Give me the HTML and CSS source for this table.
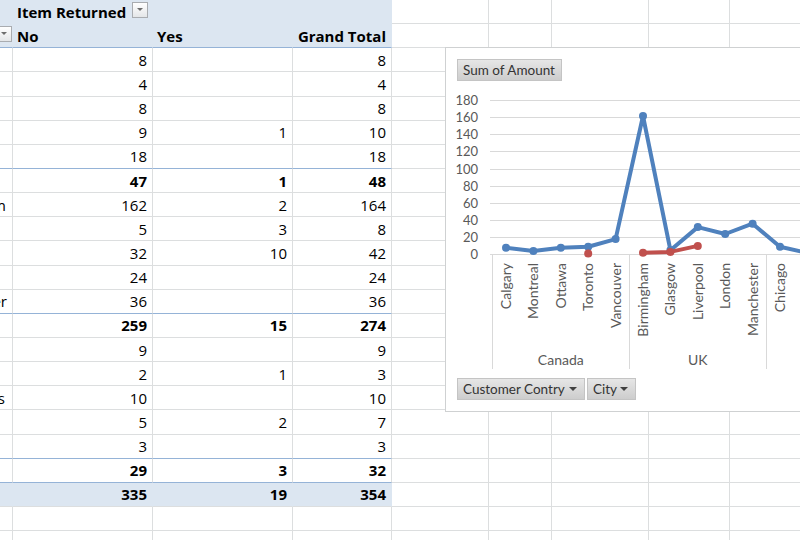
FILE: index.html
```html
<!DOCTYPE html>
<html>
<head>
<meta charset="utf-8">
<link rel="stylesheet" href="styles.css">
</head>
<body>
<div class="sheet">
  <div class="row hd">
    <div class="c p"></div>
    <div class="c p b sp">Item Returned<span class="dd"></span></div>
    <div class="c p"></div><div class="c p"></div>
    <div class="c"></div><div class="c"></div><div class="c"></div><div class="c"></div><div class="c"></div>
  </div>
  <div class="row hd hd2">
    <div class="c p cut"><span class="dd"></span></div>
    <div class="c p b">No</div>
    <div class="c p b">Yes</div>
    <div class="c p b n">Grand Total</div>
    <div class="c"></div><div class="c"></div><div class="c"></div><div class="c"></div><div class="c"></div>
  </div>
  <div class="row"><div class="c p"></div><div class="c p n">8</div><div class="c p n"></div><div class="c p n">8</div><div class="c"></div><div class="c"></div><div class="c"></div><div class="c"></div><div class="c"></div></div>
  <div class="row"><div class="c p"></div><div class="c p n">4</div><div class="c p n"></div><div class="c p n">4</div><div class="c"></div><div class="c"></div><div class="c"></div><div class="c"></div><div class="c"></div></div>
  <div class="row"><div class="c p"></div><div class="c p n">8</div><div class="c p n"></div><div class="c p n">8</div><div class="c"></div><div class="c"></div><div class="c"></div><div class="c"></div><div class="c"></div></div>
  <div class="row"><div class="c p"></div><div class="c p n">9</div><div class="c p n">1</div><div class="c p n">10</div><div class="c"></div><div class="c"></div><div class="c"></div><div class="c"></div><div class="c"></div></div>
  <div class="row pre"><div class="c p"></div><div class="c p n">18</div><div class="c p n"></div><div class="c p n">18</div><div class="c"></div><div class="c"></div><div class="c"></div><div class="c"></div><div class="c"></div></div>
  <div class="row sub"><div class="c p"></div><div class="c p n">47</div><div class="c p n">1</div><div class="c p n">48</div><div class="c"></div><div class="c"></div><div class="c"></div><div class="c"></div><div class="c"></div></div>
  <div class="row"><div class="c p cut cm"><span>Birmingham</span></div><div class="c p n">162</div><div class="c p n">2</div><div class="c p n">164</div><div class="c"></div><div class="c"></div><div class="c"></div><div class="c"></div><div class="c"></div></div>
  <div class="row"><div class="c p"></div><div class="c p n">5</div><div class="c p n">3</div><div class="c p n">8</div><div class="c"></div><div class="c"></div><div class="c"></div><div class="c"></div><div class="c"></div></div>
  <div class="row"><div class="c p"></div><div class="c p n">32</div><div class="c p n">10</div><div class="c p n">42</div><div class="c"></div><div class="c"></div><div class="c"></div><div class="c"></div><div class="c"></div></div>
  <div class="row"><div class="c p"></div><div class="c p n">24</div><div class="c p n"></div><div class="c p n">24</div><div class="c"></div><div class="c"></div><div class="c"></div><div class="c"></div><div class="c"></div></div>
  <div class="row pre"><div class="c p cut cer"><span>Manchester</span></div><div class="c p n">36</div><div class="c p n"></div><div class="c p n">36</div><div class="c"></div><div class="c"></div><div class="c"></div><div class="c"></div><div class="c"></div></div>
  <div class="row sub"><div class="c p"></div><div class="c p n">259</div><div class="c p n">15</div><div class="c p n">274</div><div class="c"></div><div class="c"></div><div class="c"></div><div class="c"></div><div class="c"></div></div>
  <div class="row"><div class="c p"></div><div class="c p n">9</div><div class="c p n"></div><div class="c p n">9</div><div class="c"></div><div class="c"></div><div class="c"></div><div class="c"></div><div class="c"></div></div>
  <div class="row"><div class="c p"></div><div class="c p n">2</div><div class="c p n">1</div><div class="c p n">3</div><div class="c"></div><div class="c"></div><div class="c"></div><div class="c"></div><div class="c"></div></div>
  <div class="row"><div class="c p cut cs"><span>Los Angeles</span></div><div class="c p n">10</div><div class="c p n"></div><div class="c p n">10</div><div class="c"></div><div class="c"></div><div class="c"></div><div class="c"></div><div class="c"></div></div>
  <div class="row"><div class="c p"></div><div class="c p n">5</div><div class="c p n">2</div><div class="c p n">7</div><div class="c"></div><div class="c"></div><div class="c"></div><div class="c"></div><div class="c"></div></div>
  <div class="row pre"><div class="c p"></div><div class="c p n">3</div><div class="c p n"></div><div class="c p n">3</div><div class="c"></div><div class="c"></div><div class="c"></div><div class="c"></div><div class="c"></div></div>
  <div class="row sub pre"><div class="c p"></div><div class="c p n">29</div><div class="c p n">3</div><div class="c p n">32</div><div class="c"></div><div class="c"></div><div class="c"></div><div class="c"></div><div class="c"></div></div>
  <div class="row gt"><div class="c p"></div><div class="c p n">335</div><div class="c p n">19</div><div class="c p n">354</div><div class="c"></div><div class="c"></div><div class="c"></div><div class="c"></div><div class="c"></div></div>
  <div class="row"><div class="c p"></div><div class="c p"></div><div class="c p"></div><div class="c p"></div><div class="c"></div><div class="c"></div><div class="c"></div><div class="c"></div><div class="c"></div></div>
  <div class="row"><div class="c p"></div><div class="c p"></div><div class="c p"></div><div class="c p"></div><div class="c"></div><div class="c"></div><div class="c"></div><div class="c"></div><div class="c"></div></div>
</div>

<div class="chart">
  <div class="chart-top"><span class="btn">Sum of Amount</span></div>
  <svg class="plot" width="359" height="295" viewBox="446 81 359 295">
    <g class="grid">
      <line x1="490" y1="100.5" x2="805" y2="100.5"/>
      <line x1="490" y1="117.5" x2="805" y2="117.5"/>
      <line x1="490" y1="134.5" x2="805" y2="134.5"/>
      <line x1="490" y1="151.5" x2="805" y2="151.5"/>
      <line x1="490" y1="169.5" x2="805" y2="169.5"/>
      <line x1="490" y1="186.5" x2="805" y2="186.5"/>
      <line x1="490" y1="203.5" x2="805" y2="203.5"/>
      <line x1="490" y1="220.5" x2="805" y2="220.5"/>
      <line x1="490" y1="237.5" x2="805" y2="237.5"/>
      <line x1="490" y1="254.5" x2="805" y2="254.5"/>
      <line x1="492.5" y1="254.5" x2="492.5" y2="369"/>
      <line x1="629.5" y1="254.5" x2="629.5" y2="369"/>
      <line x1="766.5" y1="254.5" x2="766.5" y2="369"/>
    </g>
    <g class="ylab">
      <text x="478" y="105">180</text>
      <text x="478" y="122">160</text>
      <text x="478" y="139">140</text>
      <text x="478" y="156">120</text>
      <text x="478" y="173.5">100</text>
      <text x="478" y="190.5">80</text>
      <text x="478" y="207.5">60</text>
      <text x="478" y="224.5">40</text>
      <text x="478" y="241.5">20</text>
      <text x="478" y="258.5">0</text>
    </g>
    <g class="xlab">
      <text x="511" y="263" transform="rotate(-90 511 263)">Calgary</text>
      <text x="538.4" y="263" transform="rotate(-90 538.4 263)">Montreal</text>
      <text x="565.8" y="263" transform="rotate(-90 565.8 263)">Ottawa</text>
      <text x="593.2" y="263" transform="rotate(-90 593.2 263)">Toronto</text>
      <text x="620.6" y="263" transform="rotate(-90 620.6 263)">Vancouver</text>
      <text x="648" y="263" transform="rotate(-90 648 263)">Birmingham</text>
      <text x="675.4" y="263" transform="rotate(-90 675.4 263)">Glasgow</text>
      <text x="702.8" y="263" transform="rotate(-90 702.8 263)">Liverpool</text>
      <text x="730.2" y="263" transform="rotate(-90 730.2 263)">London</text>
      <text x="757.6" y="263" transform="rotate(-90 757.6 263)">Manchester</text>
      <text x="785" y="263" transform="rotate(-90 785 263)">Chicago</text>
      <text x="812.4" y="263" transform="rotate(-90 812.4 263)">Dallas</text>
    </g>
    <g class="glab">
      <text x="560.8" y="365">Canada</text>
      <text x="697.8" y="365">UK</text>
    </g>
    <polyline class="s1" points="506,247.7 533.4,251.1 560.8,247.7 588.2,246.8 615.6,239.1 643,116 670.4,250.2 697.8,227.1 725.2,234 752.6,223.7 780,246.8 807.4,252.8"/>
    <g class="d1">
      <circle cx="506" cy="247.7" r="4"/>
      <circle cx="533.4" cy="251.1" r="4"/>
      <circle cx="560.8" cy="247.7" r="4"/>
      <circle cx="588.2" cy="246.8" r="4"/>
      <circle cx="615.6" cy="239.1" r="4"/>
      <circle cx="643" cy="116" r="4"/>
      <circle cx="670.4" cy="250.2" r="4"/>
      <circle cx="697.8" cy="227.1" r="4"/>
      <circle cx="725.2" cy="234" r="4"/>
      <circle cx="752.6" cy="223.7" r="4"/>
      <circle cx="780" cy="246.8" r="4"/>
    </g>
    <polyline class="s2" points="643,252.8 670.4,251.9 697.8,245.9"/>
    <g class="d2">
      <circle cx="588.2" cy="253.6" r="4"/>
      <circle cx="643" cy="252.8" r="4"/>
      <circle cx="670.4" cy="251.9" r="4"/>
      <circle cx="697.8" cy="245.9" r="4"/>
    </g>
  </svg>
  <div class="chart-bottom">
    <span class="btn fld w1">Customer Contry<i class="arr"></i></span>
    <span class="btn fld w2">City<i class="arr"></i></span>
  </div>
</div>
</body>
</html>
```
FILE: styles.css
```css
html, body {
  margin: 0;
  padding: 0;
  background: #ffffff;
}
body {
  width: 800px;
  height: 540px;
  overflow: hidden;
  position: relative;
  font-family: "Open Sans", Lato, "Liberation Sans", sans-serif;
  color: #000;
}
.sheet {
  display: grid;
  grid-template-columns: 13px 140px 140px 99px 97px 63px 97px 81px 140px;
  grid-auto-rows: 24.15px;
  font-size: 15px;
}
.row { display: contents; }
.c {
  box-sizing: border-box;
  border-right: 1px solid #dcdedf;
  border-bottom: 1px solid #dcdedf;
  padding: 0 5px 0 4px;
  display: flex;
  align-items: center;
  white-space: nowrap;
  overflow: hidden;
  min-width: 0;
}
.n { justify-content: flex-end; }
.b { font-weight: 700; }
.sp { justify-content: space-between; padding-right: 4px; }
.cut { justify-content: flex-end; padding: 0 4px 0 0; }
.cut span { flex: none; }
.cm { padding-right: 6px; }
.cer { padding-right: 5px; }
.cs { padding-right: 7px; }
.hd .p {
  background: #dce6f1;
  border-right-color: #dce6f1;
  border-bottom-color: #dce6f1;
}
.hd2 .p { border-bottom-color: #95b3d7; }
.pre .p { border-bottom-color: #95b3d7; }
.sub .p { font-weight: 700; }
.gt .p {
  background: #dce6f1;
  border-right-color: #dce6f1;
  font-weight: 700;
}
.dd {
  flex: none;
  box-sizing: border-box;
  width: 16px;
  height: 16px;
  margin-top: -4px;
  border: 1px solid #a9acb0;
  background: linear-gradient(#ffffff, #e4e6e8);
  display: flex;
  align-items: center;
  justify-content: center;
}
.dd::after {
  content: "";
  border-left: 3px solid transparent;
  border-right: 3px solid transparent;
  border-top: 3px solid #6d6d6d;
}
.cut .dd { margin-right: -4px; }

.chart {
  position: absolute;
  left: 445px;
  top: 47px;
  width: 362px;
  height: 365px;
  box-sizing: border-box;
  border: 1px solid #cfd1d2;
  background: #fff;
  display: flex;
  flex-direction: column;
  font-family: Lato, "Liberation Sans", sans-serif;
}
.chart-top {
  padding: 11px 0 0 11px;
  height: 22px;
  display: flex;
}
.btn {
  box-sizing: border-box;
  height: 22px;
  padding: 0 6px 0 5px;
  display: inline-flex;
  align-items: center;
  background: linear-gradient(#e6e6e6, #cdcdcd);
  border: 1px solid #c4c4c4;
  font-size: 13.5px;
  color: #333;
}
.plot { display: block; flex: none; }
.grid line { stroke: #d9d9d9; stroke-width: 1; }
.ylab text { font-size: 13px; fill: #595959; text-anchor: end; font-family: Lato, "Liberation Sans", sans-serif; }
.xlab text { font-size: 14px; fill: #595959; text-anchor: end; font-family: Lato, "Liberation Sans", sans-serif; }
.glab text { font-size: 14px; fill: #595959; text-anchor: middle; font-family: Lato, "Liberation Sans", sans-serif; }
.s1 { fill: none; stroke: #4f81bd; stroke-width: 4; stroke-linejoin: round; stroke-linecap: round; }
.d1 circle { fill: #4f81bd; }
.s2 { fill: none; stroke: #c0504d; stroke-width: 4; stroke-linejoin: round; stroke-linecap: round; }
.d2 circle { fill: #c0504d; }
.chart-bottom {
  padding: 2px 0 0 11px;
  display: flex;
  gap: 2px;
}
.fld { justify-content: space-between; padding: 0 7px 0 5px; }
.w1 { width: 128px; }
.w2 { width: 49px; }
.arr {
  border-left: 4px solid transparent;
  border-right: 4px solid transparent;
  border-top: 4px solid #404040;
}
```
